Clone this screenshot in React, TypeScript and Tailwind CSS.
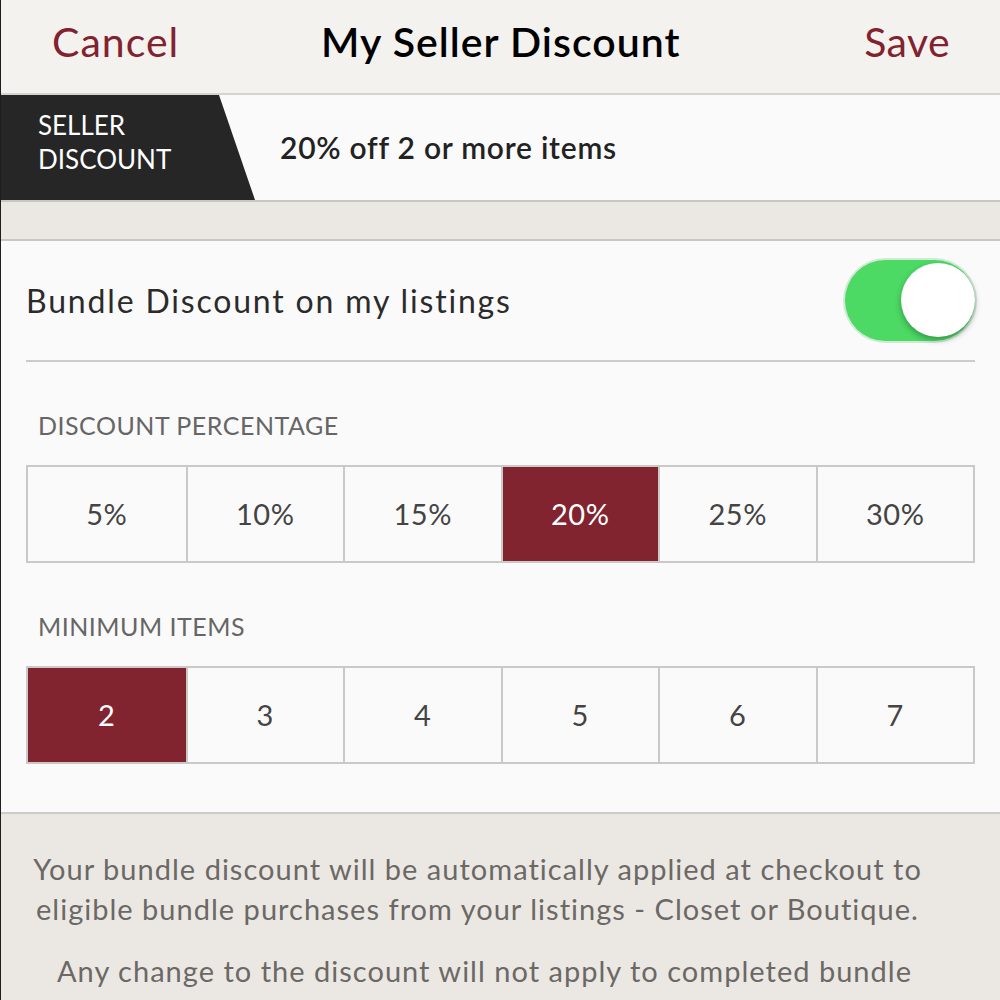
const percentages = ["5%", "10%", "15%", "20%", "25%", "30%"];
const minItems = ["2", "3", "4", "5", "6", "7"];

function OptionRow({ options, selected }: { options: string[]; selected: string }) {
  return (
    <div className="grid grid-cols-6 border-2 border-[#cbc9c7] h-[98px]">
      {options.map((opt, i) => (
        <div
          key={opt}
          className={
            "flex items-center justify-center text-[29px] tracking-[0.02em] " +
            (i > 0 ? "border-l-2 border-[#cbc9c7] " : "") +
            (opt === selected ? "bg-[#822330] text-white" : "text-[#444]")
          }
        >
          {opt}
        </div>
      ))}
    </div>
  );
}

function Toggle() {
  return (
    <div className="relative w-[130px] h-[81px] rounded-full bg-[#4cd964] shadow-[0_0_0_2px_#cfe9d4]">
      <div className="absolute right-0 top-[3px] w-[74px] h-[74px] rounded-full bg-white shadow-[0_3px_6px_rgba(0,0,0,0.3)]" />
    </div>
  );
}

export default function App() {
  return (
    <div className="w-[1000px] h-[1000px] overflow-hidden border-l border-[#1e1e1e] bg-[#ebe8e4] font-['Lato','Liberation_Sans',sans-serif]">
      {/* nav bar */}
      <div className="h-[95px] flex items-center justify-between pl-[51px] pr-[50px] pb-[10px] bg-[#f4f2ef] border-b-2 border-[#d6d4d0]">
        <span className="text-[41px] tracking-[0.025em] text-[#83222f]">Cancel</span>
        <span className="text-[41px] tracking-[0.025em] font-semibold text-black -ml-[42px]">My Seller Discount</span>
        <span className="text-[41px] tracking-[0.01em] text-[#83222f]">Save</span>
      </div>

      {/* current discount banner */}
      <div className="h-[107px] flex items-center bg-[#fbfafa] border-b-2 border-[#c9c7c3]">
        <div className="h-full w-[254px] bg-[#262626] [clip-path:polygon(0_0,218px_0,254px_100%,0_100%)] flex flex-col justify-center pl-[37px] text-white text-[26px] leading-[34px] pb-[12px]">
          <span>SELLER</span>
          <span>DISCOUNT</span>
        </div>
        <span className="ml-[25px] text-[30px] tracking-[0.025em] font-semibold text-[#222]">20% off 2 or more items</span>
      </div>

      <div className="h-[39px] border-b-2 border-[#c9c7c3]" />

      {/* bundle settings */}
      <div className="bg-[#fbfafb] px-[25px] border-b-2 border-[#cfccc8]">
        <div className="h-[121px] flex items-center justify-between border-b-2 border-[#cbcbcb]">
          <span className="text-[32px] tracking-[0.057em] text-[#2b2b2b]">Bundle Discount on my listings</span>
          <Toggle />
        </div>

        <div className="pt-[51px] pl-[12px] text-[25px] tracking-[0.02em] text-[#666] leading-none">DISCOUNT PERCENTAGE</div>
        <div className="mt-[27px]">
          <OptionRow options={percentages} selected="20%" />
        </div>

        <div className="pt-[51px] pl-[12px] text-[25px] tracking-[0.02em] text-[#666] leading-none">MINIMUM ITEMS</div>
        <div className="mt-[27px] pb-[48px]">
          <OptionRow options={minItems} selected="2" />
        </div>
      </div>

      {/* footnote */}
      <div className="pt-[35px] pr-[46px] text-center text-[29px] tracking-[0.035em] leading-[40px] text-[#6b6865]">
        <p>
          Your bundle discount will be automatically applied at checkout to
          <br />
          eligible bundle purchases from your listings - Closet or Boutique.
        </p>
        <p className="mt-[22px] pl-[14px]">
          Any change to the discount will not apply to completed bundle
          <br />
          purchases.
        </p>
      </div>
    </div>
  );
}
